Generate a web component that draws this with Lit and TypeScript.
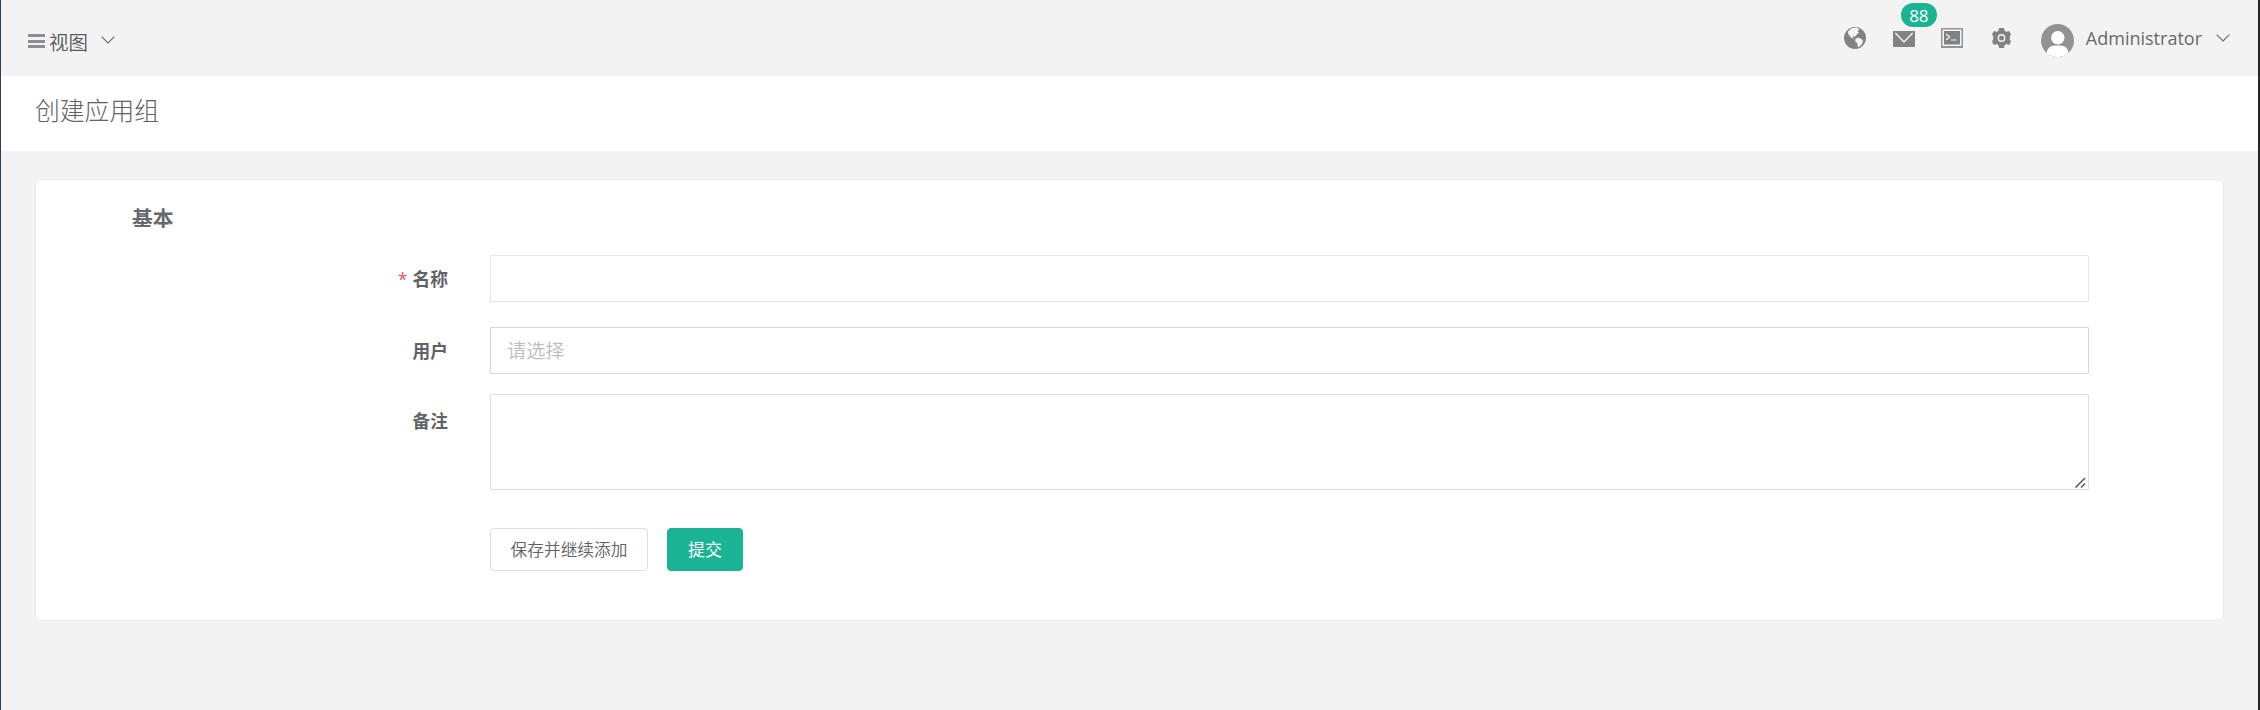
import { LitElement, html, css, svg } from "lit";
import { customElement } from "lit/decorators.js";

const chevron = html`<svg class="chevron" width="14" height="8" viewBox="0 0 14 8">
  <path d="M.6.7 7 6.9 13.4.7" fill="none" stroke="#676a6c" stroke-width="1.1" />
</svg>`;

const bars = svg`<path d="M0 0h17v3H0zM0 6h17v3H0zM0 11h17v3H0z" fill="#8b8e94"/>`;

@customElement("app-root")
export class AppRoot extends LitElement {
  static styles = css`
    :host {
      display: block;
      box-sizing: border-box;
      height: 710px;
      overflow: hidden;
      background: #f3f3f3;
      border-left: 1px solid #2f4050;
      border-right: 2px solid #252525;
      color: #606266;
      font-family: "Open Sans", "Noto Sans CJK SC", sans-serif;
      font-size: 17px;
    }
    * { box-sizing: border-box; }
    svg { display: block; flex: none; }
    .topbar {
      display: flex;
      justify-content: space-between;
      height: 76px;
      padding: 0 28px 0 27px;
    }
    .view { display: flex; align-items: center; height: 82px; font-size: 19.5px; font-weight: 350; color: #55585c; }
    .view span { margin: 0 13px 0 4px; }
    .view .chevron { margin-top: -3px; }
    .tools { display: flex; align-items: center; height: 76px; }
    .globe { margin-right: 27px; }
    .mail { position: relative; margin-right: 26px; }
    .mail svg { margin-top: 2px; }
    .badge {
      position: absolute;
      left: 8px;
      top: -26px;
      width: 36px;
      height: 24px;
      border-radius: 12px;
      background: #1ab394;
      color: #fff;
      font-size: 17px;
      line-height: 25px;
      text-align: center;
    }
    .terminal { margin-right: 29px; }
    .gear { margin-right: 30px; margin-top: -1px; }
    .avatar { margin: 5px 12px 0 0; }
    .user { font-size: 18px; line-height: 24px; color: #676a6c; margin-right: 14px; }
    .heading {
      height: 75px;
      padding: 0 34px;
      background: #fff;
      font-size: 24.8px;
      font-weight: 300;
      line-height: 69px;
    }
    .card {
      height: 442px;
      margin: 28px 34px 0 34px;
      padding: 20px 134px 0 96px;
      border: 1px solid #e7eaec;
      border-radius: 7px;
      background: #fff;
    }
    .section { height: 55px; font-size: 20.8px; font-weight: 700; line-height: 37px; color: #676a6c; }
    .row { display: flex; }
    .label {
      width: 316px;
      flex: none;
      text-align: right;
      font-size: 17.7px;
      font-weight: 700;
      line-height: 48px;
      height: 47px;
    }
    .required { color: #ed5565; font-weight: 400; margin-right: 5px; }
    .field {
      flex: 1;
      height: 47px;
      margin-left: 42px;
      border: 1px solid #e5e6e7;
      border-radius: 1px;
      background: #fff;
    }
    .name { margin-bottom: 25px; }
    .select {
      border-color: #d5d7dc;
      padding-left: 16px;
      color: #b9bdc6;
      font-size: 19.2px;
      font-weight: 350;
      line-height: 46px;
    }
    .select-row { margin-bottom: 20px; }
    .note .label { line-height: 55px; }
    .area {
      display: flex;
      align-items: flex-end;
      justify-content: flex-end;
      height: 96px;
      padding: 0 2px 1px 0;
      border-color: #dcdfe6;
    }
    .actions { display: flex; gap: 19px; margin: 38px 0 0 358px; }
    .button {
      height: 43px;
      border: 1px solid #dcdfe6;
      border-radius: 4px;
      width: 158px;
      text-align: center;
      font-size: 16.7px;
      font-weight: 350;
      line-height: 42px;
    }
    .primary { width: 76px; border-color: #1ab394; background: #1ab394; color: #fff; font-size: 17px; font-weight: 400; }
  `;

  render() {
    return html`
      <header class="topbar">
        <div class="view">
          <svg width="17" height="14" viewBox="0 0 17 14">${bars}</svg>
          <span>视图</span>${chevron}
        </div>
        <div class="tools">
          <svg class="globe" width="22" height="22" viewBox="0 0 22 22">
            <circle cx="11" cy="11" r="11" fill="#808284" />
            <path d="M3.6 5 7 1.400 12.500.6 15.500 2.200 13.400 4.200 15 5.600 12.800 7.600 11.300 9.800 8.600 9 9.800 11.800 6.800 10.600 4.800 7.700z" fill="#f3f3f3" />
            <path d="M11.200 12.200 13.500 10.800 16.800 11.600 19.200 13.700 17.800 17.400 14.600 20.200 13.400 19 13.600 16.600 11.400 14.800z" fill="#f3f3f3" />
          </svg>
          <div class="mail">
            <svg width="22" height="16" viewBox="0 0 22 16">
              <path d="M0 0h22v16H0z" fill="#808284" />
              <path d="m2.300 2 8.700 9 8.700-9" fill="none" stroke="#f3f3f3" stroke-width="1.5" />
            </svg>
            <span class="badge">88</span>
          </div>
          <svg class="terminal" width="22" height="20" viewBox="0 0 22 20">
            <path d="M0 0h22v20H0z" fill="#929496" />
            <path d="M1.500 1.500h19v16.500h-19z" fill="#f3f3f3" />
            <path d="M3 3h16v13.500H3z" fill="#808284" />
            <path d="m5.200 6 3.300 3-3.300 3M10 12h5.500" fill="none" stroke="#f3f3f3" stroke-width="1.200" />
          </svg>
          <svg class="gear" width="19" height="20" viewBox="0 0 19 20">
            <path d="M7 0h5l.7 3 1.500.8 3-.9 1.800 3.300-1.200 2.200v3l1.200 2.100-1.800 3.500-3-.9-1.500.9-.7 3H7l-.7-3-1.500-.9-3 .9L0 13.500l1.200-2.100v-3L0 6.200l1.800-3.300 3 .9 1.500-.8z" fill="#808284" />
            <circle cx="9.500" cy="10" r="3.200" fill="none" stroke="#f3f3f3" stroke-width="1.400" />
          </svg>
          <svg class="avatar" width="33" height="33" viewBox="0 0 33 33">
            <defs><clipPath id="face"><circle cx="16.500" cy="16.500" r="16.500" /></clipPath></defs>
            <g clip-path="url(#face)">
              <path d="M0 0h33v33H0z" fill="#929292" />
              <circle cx="16.800" cy="13.700" r="6.700" fill="#fff" />
              <path d="M5 33c0-8 4-11.500 9-11.500h5.500c5 0 8.500 3.500 8.500 11.500z" fill="#fff" />
            </g>
          </svg>
          <span class="user">Administrator</span>${chevron}
        </div>
      </header>
      <div class="heading">创建应用组</div>
      <main class="card">
        <div class="section">基本</div>
        <div class="row name">
          <div class="label"><span class="required">*</span>名称</div>
          <div class="field"></div>
        </div>
        <div class="row select-row">
          <div class="label">用户</div>
          <div class="field select">请选择</div>
        </div>
        <div class="row note">
          <div class="label">备注</div>
          <div class="field area">
            <svg width="11" height="11" viewBox="0 0 11 11">
              <path d="M.5 10.500 10 1M6 10.500 10 6.500" fill="none" stroke="#555" stroke-width="1.500" />
            </svg>
          </div>
        </div>
        <div class="actions">
          <div class="button">保存并继续添加</div>
          <div class="button primary">提交</div>
        </div>
      </main>
    `;
  }
}
